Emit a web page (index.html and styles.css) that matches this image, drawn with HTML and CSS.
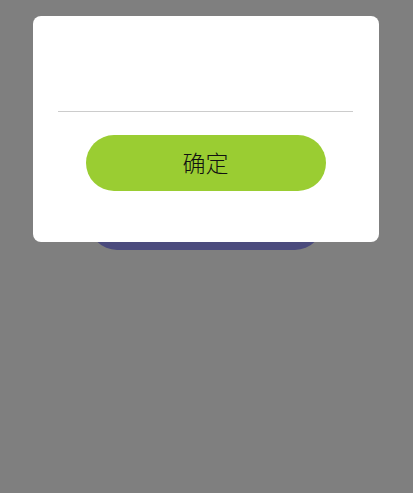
FILE: index.html
```html
<!DOCTYPE html>
<html lang="zh">
<head>
  <meta charset="UTF-8">
  <title>Dialog</title>
  <meta name="viewport" content="width=device-width, initial-scale=1.0">
  <link rel="stylesheet" href="styles.css">
</head>
<body>

<!-- Page content under the mask -->
<main class="page">
  <button class="page-btn">打开弹窗</button>
</main>

<!-- Dialog -->
<div class="mask">
  <div class="dialog">
    <div class="dialog-body"></div>
    <hr class="dialog-line">
    <div class="dialog-footer">
      <button class="confirm-btn">确定</button>
    </div>
  </div>
</div>

</body>
</html>
```

FILE: styles.css
```css
/* Global styles */
body {
  margin: 0;
  padding: 0;
  background: #fff;
  font-family: "Noto Sans CJK SC", "Liberation Sans", sans-serif;
}

.page {
  display: flex;
  justify-content: center;
  padding-top: 194px;
  padding-right: 1px;
}

.page-btn {
  width: 234px;
  height: 56px;
  border: none;
  border-radius: 28px;
  background: #9696fa;
  color: #fff;
  font-size: 22px;
  font-family: inherit;
}

/* Mask */
.mask {
  position: fixed;
  top: 0;
  left: 0;
  right: 0;
  bottom: 0;
  background: rgba(0, 0, 0, 0.5);
  display: flex;
  justify-content: center;
  align-items: flex-start;
  padding: 16px 1px 0 0;
}

.dialog {
  width: 346px;
  background: #fff;
  border-radius: 8px;
  padding: 0 26px 51px 25px;
  box-sizing: border-box;
}

.dialog-body {
  height: 95px;
}

.dialog-line {
  margin: 0;
  border: none;
  border-top: 1px solid #cccccc;
}

.dialog-footer {
  display: flex;
  justify-content: center;
  padding-top: 23px;
}

.confirm-btn {
  width: 240px;
  height: 56px;
  border: none;
  border-radius: 28px;
  background: #9acd32;
  color: #111;
  font-size: 23px;
  font-family: inherit;
  font-weight: 300;
  padding: 0 0 2px;
}
```
